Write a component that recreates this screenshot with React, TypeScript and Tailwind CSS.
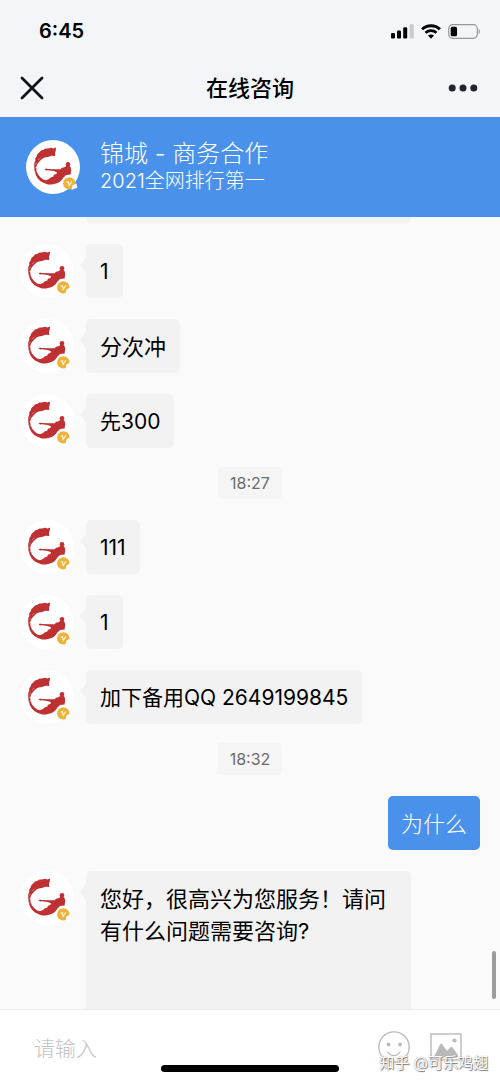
import type { ReactNode } from "react";

function Avatar() {
  return (
    <svg viewBox="0 0 54 54" className="size-[54px] shrink-0" role="img" aria-label="锦城">
      <circle cx="27" cy="27" r="27" fill="#fff" />
      <g fill="#bf3033">
        <path d="M30 7.6 27.5 8.4 25 7.8 22 8.6 19.5 8.4 17.5 9.8 15 10.4 13.2 12.6 11.4 14 10.6 16.4 9.2 18.6 9.3 20.6 8.2 23.5 8.2 27 8.6 31 9.8 35 11.8 38.4 14.6 41.3 18 43 22 44.4 26 44.4 30 43.6 33.2 42.2 35.8 40 37.4 37.4 38.6 36.6 40 35 44.6 34.6 45.2 30 44.6 27 42.8 25.6 40.6 25.7 38.4 27.2 36 27.8 34.6 29.2 30 29.2 21.6 29.1 20 28.6 18.6 29.5 20 30.6 22 30.2 27.6 31 31 32.2 30.4 34 27.8 34.8 27.4 36.6 24.6 37.4 23 39 20 40.2 17.2 39.6 14.6 37.4 12 34.4 10.6 31 10.2 27.6 11 24.6 13 22 14.4 20.6 16.6 18.4 18.6 17.4 22 17 25.4 15.8 29.2 16 29 12.6 29.8 10.4Z" />
        <circle cx="42" cy="24.2" r="2.3" />
      </g>
      <path d="M8.8 24.5 10.8 23M8.5 28 10.3 27M9.2 32 11 31.5M12 20 14.5 18" stroke="#e7a3a2" strokeWidth=".6" />
      <circle cx="43.3" cy="43.4" r="6.2" fill="#edb338" />
      <path d="M40.6 42.2 42.4 41.6 43.2 45.4 46 41.2" fill="none" stroke="#fff6df" strokeWidth="1.1" />
      <path d="m45.4 50 1.1-4.6 3.8-2.2 1.2 4.4Z" fill="#fff" />
    </svg>
  );
}

type IncomingProps = { children: ReactNode; fill?: boolean; numeric?: boolean };

function Incoming({ children, fill = false, numeric = false }: IncomingProps) {
  return (
    <li className={fill ? "flex grow items-stretch gap-3" : "flex items-start gap-3"}>
      <Avatar />
      <div
        className={
          fill
            ? "relative min-h-[138px] w-[325px] rounded-t-[5px] bg-[#f2f2f2] px-3.5 pt-3 pb-2.5"
            : "relative rounded-[5px] bg-[#f2f2f2] px-3.5 pt-3 pb-2.5"
        }
      >
        <svg viewBox="0 0 6 14" className="absolute top-3.5 -left-1.5 h-3.5 w-1.5" aria-hidden="true">
          <path d="M6 0v14L0 7Z" fill="#f2f2f2" />
        </svg>
        <p className={numeric ? "text-[21px] leading-8" : "text-[22px] leading-8"}>{children}</p>
      </div>
    </li>
  );
}

function TimeMark({ children }: { children: ReactNode }) {
  return (
    <li className="-mt-0.5 flex justify-center">
      <time className="rounded-[4px] bg-[#f5f5f5] px-3 text-base leading-8 text-[#6b6b6b]">{children}</time>
    </li>
  );
}

function StatusIcons() {
  return (
    <div className="flex items-center gap-[7px]" aria-hidden="true">
      <svg viewBox="0 0 23 15" className="h-[15px] w-[23px]">
        <rect x="0" y="9" width="4" height="5.5" rx="1.2" />
        <rect x="6" y="6.5" width="4" height="8" rx="1.2" />
        <rect x="12.2" y="3.3" width="4" height="11.2" rx="1.2" />
        <rect x="18.7" y="0" width="4" height="14.5" rx="1.2" fill="#cbcbcf" />
      </svg>
      <svg viewBox="0 0 20 15" className="h-[15px] w-5" fill="none" stroke="#000">
        <path d="M1.1 5.2C6 .5 14 .5 18.9 5.2" strokeWidth="2.9" />
        <path d="M4.5 8.7C7.6 5.9 12.4 5.9 15.5 8.7" strokeWidth="2.6" />
        <path d="M7 11.6C8.7 10.1 11.3 10.1 13 11.6L10 14.7Z" fill="#000" stroke="none" />
      </svg>
      <svg viewBox="0 0 33 15" className="h-[15px] w-[33px]">
        <rect x=".7" y=".7" width="28.6" height="13.6" rx="4" fill="none" stroke="#97979a" strokeWidth="1.2" />
        <rect x="2.7" y="2.7" width="6.3" height="9.6" rx="1.6" />
        <path d="M30.6 5c1.7.5 1.7 4.5 0 5Z" fill="#97979a" />
      </svg>
    </div>
  );
}

export default function App() {
  return (
    <div className="flex min-h-screen flex-col bg-[#fafafa] font-['Inter','Noto_Sans_CJK_SC',sans-serif] text-black">
      <header className="bg-[#f4f5f9]">
        <div className="flex h-[60px] items-center justify-between pt-0.5 pr-[19px] pl-[39px]">
          <time className="text-[20px] font-semibold">6:45</time>
          <StatusIcons />
        </div>
        <div className="grid h-[57px] grid-cols-[1fr_auto_1fr] items-center px-5 pb-px">
          <button type="button" aria-label="关闭" className="justify-self-start">
            <svg viewBox="0 0 24 24" className="size-6" fill="none" stroke="#11131d" strokeWidth="2.8" strokeLinecap="round">
              <path d="M2 2 22 22M22 2 2 22" />
            </svg>
          </button>
          <h1 className="text-[22px] font-medium">在线咨询</h1>
          <button type="button" aria-label="更多" className="justify-self-end pr-0.5">
            <svg viewBox="0 0 30 8" className="h-2 w-[30px]" fill="#23232f">
              <circle cx="4.2" cy="4" r="3.5" />
              <circle cx="15" cy="4" r="3.5" />
              <circle cx="25.8" cy="4" r="3.5" />
            </svg>
          </button>
        </div>
      </header>

      <section className="flex h-[100px] items-center gap-5 bg-[#4991ea] px-[26px] text-white">
        <Avatar />
        <div className="font-light">
          <h2 className="text-2xl leading-7">锦城 - 商务合作</h2>
          <p className="text-[20px] leading-[26px]">2021全网排行第一</p>
        </div>
      </section>

      <main className="relative flex grow flex-col">
        <ul className="flex grow flex-col gap-[21px] px-5">
          <li className="ml-[66px] h-1.5 w-[325px] rounded-b-[5px] bg-[#f2f2f2]" />
          <Incoming numeric>1</Incoming>
          <Incoming>分次冲</Incoming>
          <Incoming numeric>先300</Incoming>
          <TimeMark>18:27</TimeMark>
          <Incoming numeric>111</Incoming>
          <Incoming numeric>1</Incoming>
          <Incoming numeric>加下备用QQ 2649199845</Incoming>
          <TimeMark>18:32</TimeMark>
          <li className="flex justify-end">
            <p className="rounded-[5px] bg-[#4991ea] px-[13px] pt-3 pb-2.5 text-[22px] leading-8 font-light text-white">
              为什么
            </p>
          </li>
          <Incoming fill>您好，很高兴为您服务！请问有什么问题需要咨询?</Incoming>
        </ul>
        <div className="absolute right-1 bottom-2.5 h-12 w-1 rounded-full bg-[#9c9c9c]" />
      </main>

      <footer className="relative flex h-[74px] items-center gap-5 border-t border-[#ebebeb] bg-white pr-[38px] pl-[34px]">
        <input
          type="text"
          aria-label="请输入"
          placeholder="请输入"
          className="h-10 min-w-0 grow bg-transparent pt-1 text-[21px] font-light outline-none placeholder:text-[#c4c4c4]"
        />
        <button type="button" aria-label="表情">
          <svg viewBox="0 0 32 32" className="size-8" fill="none" stroke="#b9b9b9" strokeWidth="1.3">
            <circle cx="16" cy="16" r="15.2" />
            <circle cx="10.5" cy="13.5" r="1.9" fill="#b9b9b9" stroke="none" />
            <circle cx="22" cy="13.5" r="1.9" fill="#b9b9b9" stroke="none" />
            <path d="M10 21c3 4.8 9 4.8 12 0" strokeLinecap="round" />
          </svg>
        </button>
        <button type="button" aria-label="图片">
          <svg viewBox="0 0 32 28" className="h-7 w-8" fill="#b9b9b9">
            <rect x="1" y="1" width="30" height="26" fill="none" stroke="#b9b9b9" strokeWidth="1.4" />
            <circle cx="24.5" cy="7.5" r="2.1" />
            <path d="M4 24 10 11.5Q11 9.5 12.2 11.5L17 17.8 20.5 14.2Q21.6 13.2 22.6 14.4L28 22V24Z" />
          </svg>
        </button>
        <div className="absolute bottom-[11px] left-1/2 h-[7px] w-[178px] -translate-x-1/2 rounded-full bg-black" />
        <p className="absolute right-3 bottom-2 text-[15px] leading-6 text-white [text-shadow:1px_1px_1px_#777,0_0_1px_#888]">
          知乎 @可乐鸡翅
        </p>
      </footer>
    </div>
  );
}
